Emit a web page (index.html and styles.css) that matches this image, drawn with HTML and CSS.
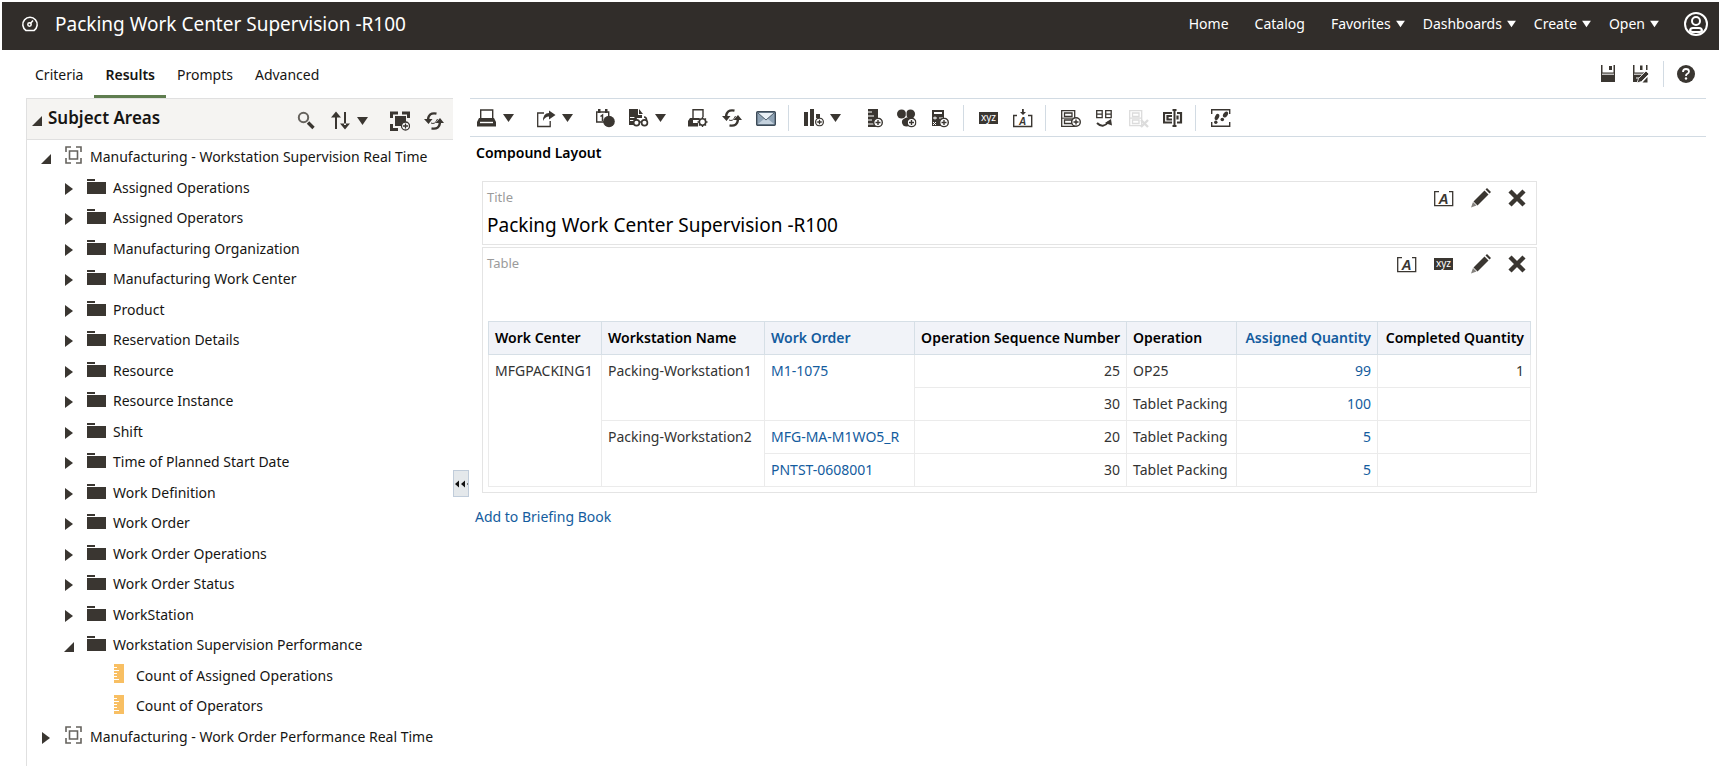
FILE: index.html
```
<!DOCTYPE html>
<html lang="en">

<head>
    <meta charset="utf-8">
    <title>Packing Work Center Supervision -R100</title>
    <meta name="viewport" content="width=device-width, initial-scale=1.0">
    <link rel="stylesheet" href="styles.css">
</head>

<body>
    <!-- icon sprite -->
    <svg class="sprite" aria-hidden="true">
        <symbol id="i-down" viewBox="0 0 11 10"><path d="M0 1h11L5.500 9z"/></symbol>
        <symbol id="i-right" viewBox="0 0 8 12"><path d="M0 0l8 6-8 6z"/></symbol>
        <symbol id="i-open" viewBox="0 0 10 10"><path d="M10 0v10H0z"/></symbol>
        <symbol id="i-gauge" viewBox="0 0 18 18"><path d="M5 15.500h8a7.200 7.200 0 1 0-8 0z" fill="none" stroke="currentColor" stroke-width="1.600"/><circle cx="8.500" cy="9.500" r="1.700" fill="none" stroke="currentColor" stroke-width="1.500"/><path d="M9 9l3-3.500" stroke="currentColor" stroke-width="1.500"/></symbol>
        <symbol id="i-user" viewBox="0 0 26 26"><g fill="none" stroke="currentColor" stroke-width="2"><circle cx="13" cy="13" r="11"/><circle cx="13" cy="10" r="4"/><path d="M7 20q0-3 3-3h6q3 0 3 3l-2 1H9z"/></g></symbol>
        <symbol id="i-save" viewBox="0 0 20 20"><path d="M2 1h1.500v7.500h11V1H16v17H2z"/><path d="M4 1h10v7H4z" fill="#fff"/><path d="M10 2h3v4h-3z"/><path d="M3 10.200h12" stroke="#fff"/></symbol>
        <symbol id="i-saveas" viewBox="0 0 20 20"><path d="M2 1h1.500v7.500h12V11l-7 7H2zM9 1.500h2.500V6H9zM15 1h1.500v5H15z"/><path d="M3 10.200h12M5 14h3" stroke="#fff"/><path d="M6 19l1.500-4.500L15 7l3 3-7.500 7.500z" stroke="#fff" stroke-width=".8"/><path d="M16.500 13v5.500h-5z"/></symbol>
        <symbol id="i-help" viewBox="0 0 20 20"><circle cx="10" cy="10" r="9"/><path d="M7 8q0-3 3-3t3 2.500q0 1.500-2 2.500-1 .5-1 2" fill="none" stroke="#fff" stroke-width="1.800"/><circle cx="10" cy="14.500" r="1.200" fill="#fff"/></symbol>
        <symbol id="i-search" viewBox="0 0 20 20"><circle cx="6.500" cy="6.500" r="4.700" fill="none" stroke="#66635e" stroke-width="2"/><path d="M11 11.500l5.500 5.500" stroke="currentColor" stroke-width="3.400"/></symbol>
        <symbol id="i-sort" viewBox="0 0 20 20"><path d="M4 5h2v13H4zM13 1h2v13h-2zM0 6.500l5-6 5 6zM9 12.500l5 6 5-6z"/></symbol>
        <symbol id="i-area" viewBox="0 0 20 20"><g fill="none" stroke="#66635e" stroke-width="1.600"><path d="M2 7V2h5M12 2h5v5M17 13v5h-5M7 18H2v-5"/><path d="M5.500 6h8v8h-8z"/></g></symbol>
        <symbol id="i-addarea" viewBox="0 0 20 20"><path d="M1.500 7V2H8M12 2h6.500v5M8 18.500H1.500V13" fill="none" stroke="currentColor" stroke-width="3"/><path d="M5 5h11v10H5z"/><circle cx="15.500" cy="15" r="4" fill="#fff" stroke="currentColor" stroke-width="1.300"/><path d="M15.500 12.500v5M13 15h5" stroke="currentColor" stroke-width="1.300"/></symbol>
        <symbol id="i-refresh" viewBox="0 0 20 20"><g fill="none" stroke="currentColor" stroke-width="2.400"><path d="M12.500 2.600Q4.500 1 4 9"/><path d="M7.500 17.400Q15.500 19 16 11"/><path d="M7 12q4 2 6.500-4" stroke-width="1"/></g><path d="M0 8h8.500l-4 5zM11.500 12h8.500l-4-5z"/></symbol>
        <symbol id="i-folder" viewBox="0 0 20 16"><path d="M0 0h8v2H0zM0 3h19v12H0z"/></symbol>
        <symbol id="i-measure" viewBox="0 0 10 19"><path d="M0 0h10v19H0z" fill="#f8bf63"/><path d="M0 3.500h3M0 6.500h5M0 9.500h3M0 12.500h3M0 15.500h5" stroke="#fff"/></symbol>
        <symbol id="i-print" viewBox="0 0 20 20"><path d="M3.700 10V2h12v8" fill="none" stroke="currentColor" stroke-width="1.400"/><path d="M2 10h15l2 4v4.500H0V14zM15 3h1v7h-1z"/><path d="M3 14.500h13" stroke="#fff" stroke-width="1.400"/></symbol>
        <symbol id="i-export" viewBox="0 0 20 20"><path d="M8 5H1.700v13.500h12.500V13" fill="none" stroke="currentColor" stroke-width="1.300"/><path d="M7 13q0-8 6-8V2.500L19.500 7 13 11.500V8.500q-4 0-6 4.500z"/></symbol>
        <symbol id="i-schedule" viewBox="0 0 20 20"><path d="M1.700 4h12v10h-12z" fill="none" stroke="currentColor" stroke-width="1.400"/><path d="M3 1h2.500v4H3zM10 1h2.500v4H10z"/><path d="M5.500 8.500l2-1.500v6" fill="none" stroke="currentColor" stroke-width="1.500"/><circle cx="14" cy="13.500" r="5.800"/></symbol>
        <symbol id="i-showview" viewBox="0 0 20 20"><path d="M0 1h9v6h4v3H8l-2 7H0z"/><path d="M10 1l4 5h-4z"/><path d="M1 9.500h6M1 12.500h4" stroke="#fff"/><g fill="#fff" stroke="currentColor" stroke-width="1.700"><circle cx="7.500" cy="14.800" r="2.900"/><circle cx="15.500" cy="14.800" r="2.900"/><path d="M5.500 12q0-3 2.500-3M17.500 12q0-3-2.500-3M10.500 14h2" fill="none"/></g></symbol>
        <symbol id="i-printopt" viewBox="0 0 20 20"><path d="M5 10V1.700h10V9" fill="none" stroke="currentColor" stroke-width="1.400"/><path d="M2 10h9v2H5v3h5v3.500H0V13z"/><circle cx="14.500" cy="14" r="3.200" fill="none" stroke="currentColor" stroke-width="1.600"/><path d="M14.500 9v2M14.500 17v2M9.500 14h2M17.500 14h2M11 10.500l1.500 1.500M18 10.500L16.500 12M11 17.500l1.500-1.500M18 17.500L16.500 16" stroke="currentColor" stroke-width="1.400"/></symbol>
        <symbol id="i-mail" viewBox="0 0 20 20"><rect x=".7" y="3.700" width="18.600" height="13.600" rx="1" fill="#8fa3b5" stroke="#3c4a57" stroke-width="1.400"/><path d="M2 5h16l-8 7z" fill="#e9f0f6"/><path d="M2 16l6-5h4l6 5z" fill="#c5d2de"/><path d="M2 5l8 7 8-7" fill="none" stroke="#4d5d6b"/></symbol>
        <symbol id="i-plus" viewBox="0 0 10 10"><circle cx="5" cy="5" r="4.300" fill="#fff" stroke="currentColor" stroke-width="1.400"/><path d="M5 2.500v5M2.500 5h5" stroke="currentColor" stroke-width="1.400"/></symbol>
        <symbol id="i-newview" viewBox="0 0 20 20"><path d="M0 4h4v14H0zM6 1h4v17H6zM12 6h4v4h-4z"/><use href="#i-plus" x="11" y="9.500" width="9" height="9"/></symbol>
        <symbol id="i-newmeasure" viewBox="0 0 20 20"><path d="M5 1h10v18H5z"/><path d="M5 4h4M5 8h6M5 12h4M5 16h6" stroke="#fff"/><use href="#i-plus" x="10" y="9.500" width="10" height="10"/></symbol>
        <symbol id="i-newgroup" viewBox="0 0 20 20"><circle cx="4.600" cy="6" r="4.600"/><circle cx="13.500" cy="6" r="4.600"/><circle cx="9.500" cy="14" r="4.600"/><path d="M9.200 2v7l-4 2.500" stroke="#fff" fill="none" stroke-width=".8"/><use href="#i-plus" x="9.500" y="9.500" width="10" height="10"/></symbol>
        <symbol id="i-newcalc" viewBox="0 0 20 20"><path d="M1 2h12v16H1z"/><path d="M3 4h8v2H3z" fill="#fff"/><path d="M2 10h4M4 8.500v3M8 10h4M2 14l3 3M5 14l-3 3" stroke="#fff"/><use href="#i-plus" x="8" y="9.500" width="10" height="10"/></symbol>
        <symbol id="i-duplicate" viewBox="0 0 20 20"><path d="M.7 2.700h13v15.600H.7zM3.500 5h7.500v3.500H3.500zM3.500 12h7.500v3.500H3.500z" fill="none" stroke="currentColor" stroke-width="1.300"/><path d="M.7 10.200h12" stroke="currentColor"/><use href="#i-plus" x="10" y="9" width="10" height="10"/></symbol>
        <symbol id="i-swap" viewBox="0 0 20 20"><path d="M1.700 2.700h5.500v7H1.700zM10.700 2.700h5.500v7h-5.500zM2 6.200h5M11 6.200h5" fill="none" stroke="currentColor" stroke-width="1.300"/><path d="M2 15q6 6 11.500-1" fill="none" stroke="currentColor" stroke-width="2"/><path d="M10 15l6-4 1 6.500z"/></symbol>
        <symbol id="i-remove" viewBox="0 0 20 20"><path d="M.7 2.700h12v15H.7zM3.500 5h6.500v3.500H3.500zM3.500 12h6.500v3.500H3.500zM1 10.200h12" fill="none" stroke="currentColor" stroke-width="1.300"/><path d="M12 12l7 7M19 12l-7 7" stroke="currentColor" stroke-width="2.400"/></symbol>
        <symbol id="i-rename" viewBox="0 0 20 20"><path d="M9 5H1v9.500h8M14 5h4v9.500h-4M9 8H4.500v3.500H9M14.500 7.500v4" fill="none" stroke="currentColor" stroke-width="2.200"/><path d="M11.500 2v16M9.500 2h4M9.500 18h4" stroke="currentColor" stroke-width="2"/></symbol>
        <symbol id="i-steps" viewBox="0 0 20 20"><path d="M.7 6V1.700h18V6M.7 14v4.300h18V14" fill="none" stroke="currentColor" stroke-width="1.400"/><ellipse cx="6" cy="9" rx="2" ry="3.300" transform="rotate(25 6 9)"/><circle cx="4.800" cy="14.200" r="1.700"/><ellipse cx="14.500" cy="6.500" rx="2.100" ry="3.300" transform="rotate(35 14.500 6.500)"/><circle cx="11.300" cy="11.500" r="1.800"/></symbol>
        <symbol id="i-edit" viewBox="0 0 20 20"><path d="M0 19.500l2-5.500 3.500 3.500z" fill="#85827e"/><path d="M2.500 13.500L13.500 2.500l4 4-11 11z"/><path d="M14.500 1.500L16 0l4 4-1.500 1.500z"/></symbol>
        <symbol id="i-close" viewBox="0 0 18 18"><path d="M2 2l14 14M16 2L2 16" stroke="currentColor" stroke-width="4.400"/></symbol>
        <symbol id="i-collapse" viewBox="0 0 14 8"><path d="M1 4l4-3.500v7zM7 4l4-3.500v7zM13 4l1-1v2z"/></symbol>
    </svg>

    <header class="header">
        <svg class="header-logo"><use href="#i-gauge"/></svg>
        <h1>Packing Work Center Supervision -R100</h1>
        <nav class="header-nav">
            <a href="#" class="plain">Home</a>
            <a href="#" class="plain">Catalog</a>
            <a href="#">Favorites <svg><use href="#i-down"/></svg></a>
            <a href="#">Dashboards <svg><use href="#i-down"/></svg></a>
            <a href="#">Create <svg><use href="#i-down"/></svg></a>
            <a href="#">Open <svg><use href="#i-down"/></svg></a>
        </nav>
        <button class="user" aria-label="My Account"><svg><use href="#i-user"/></svg></button>
    </header>

    <div class="tabbar">
        <nav class="tabs">
            <a href="#">Criteria</a>
            <a href="#" class="active">Results</a>
            <a href="#">Prompts</a>
            <a href="#">Advanced</a>
        </nav>
        <div class="tabbar-tools">
            <button class="btn" aria-label="Save"><svg><use href="#i-save"/></svg></button>
            <button class="btn" aria-label="Save As"><svg><use href="#i-saveas"/></svg></button>
            <span class="sep"></span>
            <button class="btn" aria-label="Help"><svg><use href="#i-help"/></svg></button>
        </div>
    </div>

    <div class="workspace">
        <aside class="sidebar">
            <div class="sidebar-head">
                <svg class="arrow-open"><use href="#i-open"/></svg>
                <h2>Subject Areas</h2>
                <button class="btn" aria-label="Search"><svg><use href="#i-search"/></svg></button>
                <button class="btn menu" aria-label="Sort"><svg><use href="#i-sort"/></svg><svg class="caret"><use href="#i-down"/></svg></button>
                <button class="btn" aria-label="Add Subject Areas"><svg><use href="#i-addarea"/></svg></button>
                <button class="btn" aria-label="Refresh"><svg><use href="#i-refresh"/></svg></button>
            </div>
            <ul class="tree">
                <li class="root"><svg class="arrow-open"><use href="#i-open"/></svg><svg class="area"><use href="#i-area"/></svg>Manufacturing - Workstation Supervision Real Time</li>
                <li><svg class="arrow"><use href="#i-right"/></svg><svg class="folder"><use href="#i-folder"/></svg>Assigned Operations</li>
                <li><svg class="arrow"><use href="#i-right"/></svg><svg class="folder"><use href="#i-folder"/></svg>Assigned Operators</li>
                <li><svg class="arrow"><use href="#i-right"/></svg><svg class="folder"><use href="#i-folder"/></svg>Manufacturing Organization</li>
                <li><svg class="arrow"><use href="#i-right"/></svg><svg class="folder"><use href="#i-folder"/></svg>Manufacturing Work Center</li>
                <li><svg class="arrow"><use href="#i-right"/></svg><svg class="folder"><use href="#i-folder"/></svg>Product</li>
                <li><svg class="arrow"><use href="#i-right"/></svg><svg class="folder"><use href="#i-folder"/></svg>Reservation Details</li>
                <li><svg class="arrow"><use href="#i-right"/></svg><svg class="folder"><use href="#i-folder"/></svg>Resource</li>
                <li><svg class="arrow"><use href="#i-right"/></svg><svg class="folder"><use href="#i-folder"/></svg>Resource Instance</li>
                <li><svg class="arrow"><use href="#i-right"/></svg><svg class="folder"><use href="#i-folder"/></svg>Shift</li>
                <li><svg class="arrow"><use href="#i-right"/></svg><svg class="folder"><use href="#i-folder"/></svg>Time of Planned Start Date</li>
                <li><svg class="arrow"><use href="#i-right"/></svg><svg class="folder"><use href="#i-folder"/></svg>Work Definition</li>
                <li><svg class="arrow"><use href="#i-right"/></svg><svg class="folder"><use href="#i-folder"/></svg>Work Order</li>
                <li><svg class="arrow"><use href="#i-right"/></svg><svg class="folder"><use href="#i-folder"/></svg>Work Order Operations</li>
                <li><svg class="arrow"><use href="#i-right"/></svg><svg class="folder"><use href="#i-folder"/></svg>Work Order Status</li>
                <li><svg class="arrow"><use href="#i-right"/></svg><svg class="folder"><use href="#i-folder"/></svg>WorkStation</li>
                <li><svg class="arrow-open"><use href="#i-open"/></svg><svg class="folder"><use href="#i-folder"/></svg>Workstation Supervision Performance</li>
                <li class="leaf"><svg class="measure"><use href="#i-measure"/></svg>Count of Assigned Operations</li>
                <li class="leaf"><svg class="measure"><use href="#i-measure"/></svg>Count of Operators</li>
                <li class="root"><svg class="arrow"><use href="#i-right"/></svg><svg class="area"><use href="#i-area"/></svg>Manufacturing - Work Order Performance Real Time</li>
            </ul>
        </aside>

        <div class="splitter">
            <button class="splitter-btn" aria-label="Collapse pane"><svg><use href="#i-collapse"/></svg></button>
        </div>

        <main class="main">
            <div class="toolbar">
                <button class="btn menu" aria-label="Print"><svg><use href="#i-print"/></svg><svg class="caret"><use href="#i-down"/></svg></button>
                <button class="btn menu" aria-label="Export"><svg><use href="#i-export"/></svg><svg class="caret"><use href="#i-down"/></svg></button>
                <button class="btn" aria-label="Schedule"><svg><use href="#i-schedule"/></svg></button>
                <button class="btn menu" aria-label="Show how results look"><svg><use href="#i-showview"/></svg><svg class="caret"><use href="#i-down"/></svg></button>
                <button class="btn" aria-label="Print options"><svg><use href="#i-printopt"/></svg></button>
                <button class="btn" aria-label="Refresh"><svg><use href="#i-refresh"/></svg></button>
                <button class="btn" aria-label="Mail"><svg><use href="#i-mail"/></svg></button>
                <span class="sep"></span>
                <button class="btn menu" aria-label="New View"><svg><use href="#i-newview"/></svg><svg class="caret"><use href="#i-down"/></svg></button>
                <button class="btn" aria-label="New Calculated Measure"><svg><use href="#i-newmeasure"/></svg></button>
                <button class="btn" aria-label="New Group"><svg><use href="#i-newgroup"/></svg></button>
                <button class="btn" aria-label="New Calculated Item"><svg><use href="#i-newcalc"/></svg></button>
                <span class="sep"></span>
                <button class="btn" aria-label="Edit properties"><svg viewBox="0 0 20 20"><path d="M0 4h19v12H0z"/><text x="9.500" y="13" text-anchor="middle" class="xyz-text">xyz</text></svg></button>
                <button class="btn" aria-label="Import formatting"><svg viewBox="0 0 20 20"><path d="M4 7.500H.7v11h18v-11H15" fill="none" stroke="currentColor" stroke-width="1.400"/><path d="M9 1h1.800v3H13l-3 3-3-3h2z"/><text x="9.500" y="17" text-anchor="middle" class="a-text">A</text></svg></button>
                <span class="sep"></span>
                <button class="btn" aria-label="Duplicate layout"><svg><use href="#i-duplicate"/></svg></button>
                <button class="btn" aria-label="Swap layout"><svg><use href="#i-swap"/></svg></button>
                <button class="btn" aria-label="Delete layout" disabled><svg><use href="#i-remove"/></svg></button>
                <button class="btn" aria-label="Rename layout"><svg><use href="#i-rename"/></svg></button>
                <span class="sep"></span>
                <button class="btn" aria-label="Selection steps"><svg><use href="#i-steps"/></svg></button>
            </div>

            <h3>Compound Layout</h3>

            <div class="views">
                <section class="view">
                    <div class="view-head">
                        <span class="view-label">Title</span>
                        <button class="btn" aria-label="Format container"><svg viewBox="0 0 20 20"><path d="M5 3.700H.7v14h18v-14H15" fill="none" stroke="currentColor" stroke-width="1.300"/><text x="9.500" y="16" text-anchor="middle" class="a-text a-text--big">A</text></svg></button>
                        <button class="btn" aria-label="Edit view"><svg><use href="#i-edit"/></svg></button>
                        <button class="btn" aria-label="Remove view"><svg class="close"><use href="#i-close"/></svg></button>
                    </div>
                    <div class="view-title">Packing Work Center Supervision -R100</div>
                </section>

                <section class="view">
                    <div class="view-head">
                        <span class="view-label">Table</span>
                        <button class="btn" aria-label="Format container"><svg viewBox="0 0 20 20"><path d="M5 3.700H.7v14h18v-14H15" fill="none" stroke="currentColor" stroke-width="1.300"/><text x="9.500" y="16" text-anchor="middle" class="a-text a-text--big">A</text></svg></button>
                        <button class="btn" aria-label="View properties"><svg viewBox="0 0 20 20"><path d="M0 4h19v12H0z"/><text x="9.500" y="13" text-anchor="middle" class="xyz-text">xyz</text></svg></button>
                        <button class="btn" aria-label="Edit view"><svg><use href="#i-edit"/></svg></button>
                        <button class="btn" aria-label="Remove view"><svg class="close"><use href="#i-close"/></svg></button>
                    </div>
                    <table class="data">
                        <colgroup>
                            <col class="c-center"><col class="c-station"><col class="c-order"><col class="c-seq"><col class="c-op"><col class="c-assigned"><col class="c-completed">
                        </colgroup>
                        <thead>
                            <tr>
                                <th>Work Center</th>
                                <th>Workstation Name</th>
                                <th><a href="#">Work Order</a></th>
                                <th class="num">Operation Sequence Number</th>
                                <th>Operation</th>
                                <th class="num"><a href="#">Assigned Quantity</a></th>
                                <th class="num">Completed Quantity</th>
                            </tr>
                        </thead>
                        <tbody>
                            <tr>
                                <td rowspan="4">MFGPACKING1</td>
                                <td rowspan="2">Packing-Workstation1</td>
                                <td rowspan="2"><a href="#">M1-1075</a></td>
                                <td class="num">25</td>
                                <td>OP25</td>
                                <td class="num"><a href="#">99</a></td>
                                <td class="num">1</td>
                            </tr>
                            <tr>
                                <td class="num">30</td>
                                <td>Tablet Packing</td>
                                <td class="num"><a href="#">100</a></td>
                                <td></td>
                            </tr>
                            <tr>
                                <td rowspan="2">Packing-Workstation2</td>
                                <td><a href="#">MFG-MA-M1WO5_R</a></td>
                                <td class="num">20</td>
                                <td>Tablet Packing</td>
                                <td class="num"><a href="#">5</a></td>
                                <td></td>
                            </tr>
                            <tr>
                                <td><a href="#">PNTST-0608001</a></td>
                                <td class="num">30</td>
                                <td>Tablet Packing</td>
                                <td class="num"><a href="#">5</a></td>
                                <td></td>
                            </tr>
                        </tbody>
                    </table>
                </section>
            </div>

            <a href="#" class="briefing">Add to Briefing Book</a>
        </main>
    </div>
</body>

</html>
```
FILE: styles.css
```
* {
    margin: 0;
    padding: 0;
    box-sizing: border-box;
}

body {
    display: flex;
    flex-direction: column;
    min-height: 100vh;
    padding: 2px 2px 0;
    font: 14px/20px "Noto Sans", "Open Sans", sans-serif;
    color: #161513;
    background: #fff;
}

a {
    color: #145c9e;
    text-decoration: none;
}

svg {
    display: block;
    flex: none;
    fill: currentColor;
}

.sprite {
    position: absolute;
    width: 0;
    height: 0;
}

.xyz-text {
    font: 10px "Noto Sans", sans-serif;
    fill: #fff;
}

.a-text {
    font: italic bold 10px "Liberation Sans", sans-serif;
}

.a-text--big {
    font-size: 14px;
}

/* buttons */
.btn {
    display: flex;
    align-items: center;
    gap: 6px;
    border: 0;
    background: none;
    color: #3a3631;
    cursor: pointer;
}

.btn svg {
    width: 20px;
    height: 20px;
}

.btn svg.caret {
    width: 11px;
    height: 10px;
}

.btn svg.close {
    width: 18px;
    height: 18px;
}

.btn:disabled {
    color: #dcdcdc;
}

.menu {
    margin-right: 8px;
}

.sep {
    width: 1px;
    height: 26px;
    background: #d2dbe3;
}

/* header */
.header {
    display: flex;
    align-items: center;
    height: 48px;
    padding: 0 10px 4px 19px;
    background: #312d2a;
    color: #fff;
}

.header-logo {
    width: 18px;
    height: 18px;
}

.header h1 {
    margin-left: 16px;
    font-size: 19px;
    font-weight: 400;
    line-height: 24px;
}

.header-nav {
    display: flex;
    gap: 18px;
    margin-left: auto;
}

.header-nav a {
    display: flex;
    align-items: center;
    gap: 5px;
    color: #fff;
}

.header-nav .plain {
    margin-right: 8px;
}

.header-nav svg {
    width: 9px;
    height: 8px;
}

.user {
    margin-left: 24px;
    border: 0;
    background: none;
    color: #fff;
}

.user svg {
    width: 26px;
    height: 26px;
}

/* tabs */
.tabbar {
    display: flex;
    justify-content: space-between;
    height: 48px;
    padding: 0 23px 0 22px;
}

.tabs {
    display: flex;
}

.tabs a {
    padding: 15px 11px 0;
    color: #161513;
}

.tabs .active {
    border-bottom: 3px solid #5f7d4f;
    font-weight: 600;
}

.tabbar-tools {
    display: flex;
    align-items: center;
    gap: 12px;
}

/* subject areas */
.workspace {
    display: flex;
    flex: 1;
}

.sidebar {
    width: 427px;
    margin-left: 24px;
    border-left: 1px solid #e0e0e0;
}

.sidebar-head {
    display: flex;
    align-items: center;
    gap: 14px;
    height: 42px;
    padding: 4px 9px 0 5px;
    border-top: 1px solid #e0e0e0;
    border-bottom: 1px solid #e0e0e0;
    background: #f5f4f2;
}

.sidebar-head h2 {
    flex: 1;
    margin: 0 0 6px -8px;
    font-size: 17px;
    font-weight: 600;
}

.arrow-open {
    width: 10px;
    height: 10px;
    color: #3a3631;
}

.tree {
    padding-top: 2px;
    list-style: none;
}

.tree li {
    display: flex;
    align-items: center;
    height: 30px;
    padding-left: 37px;
    white-space: nowrap;
}

.tree li:nth-child(even) {
    height: 31px;
}

.tree .root {
    padding-left: 14px;
}

.tree .leaf {
    padding-left: 87px;
}

.tree .arrow {
    width: 8px;
    height: 12px;
    margin: 2px 1px 0;
    color: #3a3631;
}

.tree .arrow-open {
    margin-top: 4px;
}

.tree .folder {
    width: 20px;
    height: 16px;
    margin: 0 6px 2px 13px;
    color: #3a3631;
}

.tree .area {
    width: 20px;
    height: 20px;
    margin: 0 6px 4px 13px;
}

.tree .measure {
    width: 10px;
    height: 19px;
    margin: 0 12px 4px 0;
}

.splitter {
    display: flex;
    width: 17px;
    padding-top: 372px;
}

.splitter-btn {
    display: flex;
    align-items: center;
    justify-content: center;
    width: 16px;
    height: 27px;
    border: 1px solid #c0ccda;
    background: #e4e8eb;
    color: #111;
}

.splitter-btn svg {
    width: 14px;
    height: 8px;
}

/* results */
.main {
    flex: 1;
    min-width: 0;
    padding-right: 13px;
}

.toolbar {
    display: flex;
    align-items: center;
    gap: 14px;
    height: 39px;
    padding-left: 7px;
    border-top: 1px solid #d2dbe3;
    border-bottom: 1px solid #d2dbe3;
}

.toolbar .sep {
    margin: 0 1px 0 -2px;
}

.main h3 {
    margin: 6px 6px 18px;
    font-size: 14px;
    font-weight: 600;
    color: #000;
}

.views {
    display: flex;
    flex-direction: column;
    gap: 2px;
    width: fit-content;
    margin-left: 12px;
}

.view {
    padding: 5px;
    border: 1px solid #e4e4e4;
}

.view-head {
    display: flex;
    align-items: center;
    gap: 17px;
    height: 22px;
    padding-right: 5px;
}

.view-label {
    flex: 1;
    margin: 0 0 2px -1px;
    font-size: 13px;
    color: #9b9b9b;
}

.view-title {
    margin: 3px 0 1px -1px;
    font-size: 19px;
    line-height: 26px;
    color: #000;
}

.data {
    margin-top: 46px;
    table-layout: fixed;
    width: 1042px;
    border-collapse: collapse;
    border: 1px solid #d6dfe6;
}

.data th,
.data td {
    height: 33px;
    padding: 0 6px;
    border: 1px solid #ebebeb;
    text-align: left;
    vertical-align: top;
    line-height: 32px;
    white-space: nowrap;
    color: #333;
}

.data th {
    border-color: #d6dfe6;
    background: #f1f3f8;
    font-weight: 600;
    color: #000;
}

.data .num {
    text-align: right;
}

.c-center { width: 113px; }
.c-station { width: 163px; }
.c-order { width: 150px; }
.c-seq { width: 212px; }
.c-op { width: 110px; }
.c-assigned { width: 141px; }
.c-completed { width: 153px; }

.briefing {
    display: inline-block;
    margin: 14px 5px;
}
```
